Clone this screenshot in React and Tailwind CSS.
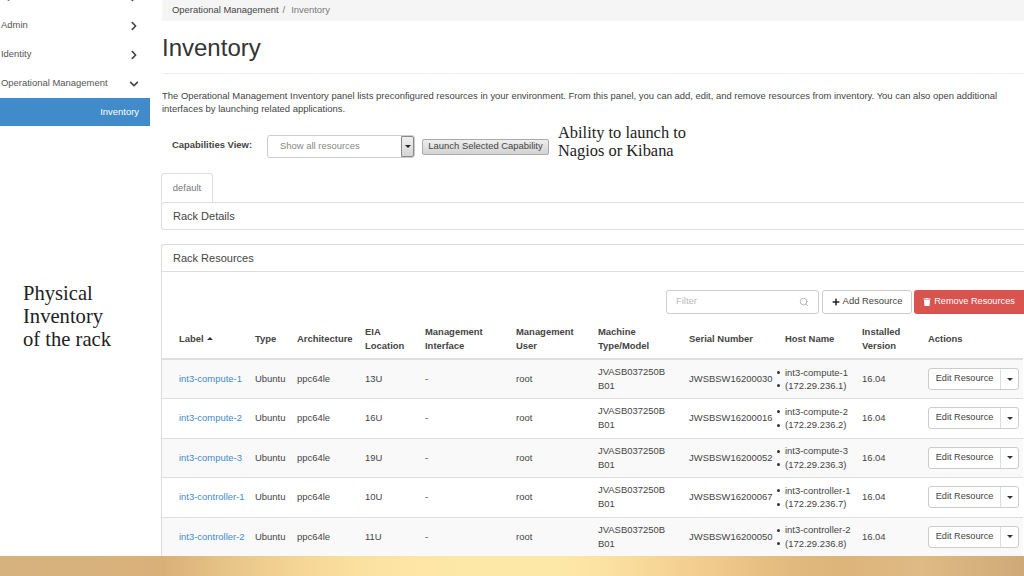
import React from 'react';
import { Search } from 'lucide-react';
import { FaChevronRight, FaChevronDown, FaPlus, FaTrash } from 'react-icons/fa';

const rows = [
    { label: 'int3-compute-1', eia: '13U', serial: 'JWSBSW16200030', host: 'int3-compute-1', ip: '(172.29.236.1)' },
    { label: 'int3-compute-2', eia: '16U', serial: 'JWSBSW16200016', host: 'int3-compute-2', ip: '(172.29.236.2)' },
    { label: 'int3-compute-3', eia: '19U', serial: 'JWSBSW16200052', host: 'int3-compute-3', ip: '(172.29.236.3)' },
    { label: 'int3-controller-1', eia: '10U', serial: 'JWSBSW16200067', host: 'int3-controller-1', ip: '(172.29.236.7)' },
    { label: 'int3-controller-2', eia: '11U', serial: 'JWSBSW16200050', host: 'int3-controller-2', ip: '(172.29.236.8)' },
];

const columns = [
    { w: 'w-[93px]', title: <>Label <span className="inline-block align-middle ml-[1px] mb-[2px] border-x-[3px] border-b-[3px] border-x-transparent border-b-[#333]" /></> },
    { w: 'w-[42px]', title: 'Type' },
    { w: 'w-[68px]', title: 'Architecture' },
    { w: 'w-[60px]', title: <>EIA<br />Location</> },
    { w: 'w-[91px]', title: <>Management<br />Interface</> },
    { w: 'w-[82px]', title: <>Management<br />User</> },
    { w: 'w-[91px]', title: <>Machine<br />Type/Model</> },
    { w: 'w-[87px]', title: 'Serial Number' },
    { w: 'w-[86px]', title: <span className="pl-[9px]">Host Name</span> },
    { w: 'w-[66px]', title: <>Installed<br />Version</> },
    { w: 'w-[95px]', title: 'Actions' },
];

function SideItem({ label, open }) {
    return (
        <div className="h-[29px] flex items-center justify-between pl-[1px] pr-[11px] text-[#555]">
            <span>{label}</span>
            {open
                ? <FaChevronDown size={10} className="text-[#444]" />
                : <FaChevronRight size={10} className="text-[#444]" />}
        </div>
    );
}

function Row({ row, striped }) {
    return (
        <tr className={`h-[39.5px] border-b border-[#ddd] whitespace-nowrap ${striped ? 'bg-[#f9f9f9]' : 'bg-white'}`}>
            <td className="pl-[17px] text-[#428bca]">{row.label}</td>
            <td>Ubuntu</td>
            <td>ppc64le</td>
            <td>{row.eia}</td>
            <td>-</td>
            <td>root</td>
            <td className="leading-[14px]">JVASB037250B<br />B01</td>
            <td>{row.serial}</td>
            <td className="leading-[13.5px] pl-[1px]">
                <div className="flex items-center gap-[5px]"><span className="w-[3px] h-[3px] rounded-full bg-[#333]" />{row.host}</div>
                <div className="flex items-center gap-[5px]"><span className="w-[3px] h-[3px] rounded-full bg-[#333]" />{row.ip}</div>
            </td>
            <td>16.04</td>
            <td>
                <div className="flex h-[22px] w-[91px] border border-[#ccc] rounded-[3px] bg-white text-[9.2px]">
                    <span className="flex-1 flex items-center justify-center border-r border-[#ddd]">Edit Resource</span>
                    <span className="w-[17px] flex items-center justify-center">
                        <span className="border-x-[3px] border-t-[3px] border-x-transparent border-t-[#333]" />
                    </span>
                </div>
            </td>
        </tr>
    );
}

export default function App() {
    return (
        <div className="relative w-[1024px] h-[576px] overflow-hidden flex flex-col bg-white text-[#444] text-[9.45px] font-['Liberation_Sans',Arial,sans-serif]">
            <div className="flex flex-1 min-h-0">
                <aside className="w-[161px] shrink-0 pr-[11px] mt-[-18px]">
                    <SideItem label="System" />
                    <SideItem label="Admin" />
                    <SideItem label="Identity" />
                    <SideItem label="Operational Management" open />
                    <div className="h-[28px] bg-[#428bca] text-white flex items-center justify-end pr-[11px]">Inventory</div>
                </aside>

                <main className="flex-1 min-w-0 overflow-hidden">
                    <div className="h-[21px] bg-[#f5f5f5] flex items-center ml-[1px] pl-[10px] gap-[4px]">
                        <span>Operational Management</span>
                        <span className="text-[#777]">/</span>
                        <span className="text-[#777] pl-[2px]">Inventory</span>
                    </div>
                    <h1 className="text-[24px] leading-[26px] mt-[14px] ml-[1px] text-[#333]">Inventory</h1>
                    <div className="border-b border-[#eee] mt-[12px] ml-[1px]" />
                    <p className="mt-[15px] ml-[1px] leading-[13px]">
                        The Operational Management Inventory panel lists preconfigured resources in your environment. From this panel, you can add, edit, and remove resources from inventory. You can also open additional<br />
                        interfaces by launching related applications.
                    </p>

                    <div className="flex items-center mt-[20px] pl-[11px]">
                        <span className="font-bold w-[95px] -mt-[2px]">Capabilities View:</span>
                        <div className="w-[148px] h-[23px] border border-[#ccc] rounded-[3px] flex items-center justify-between pl-[12px] bg-white text-[#888]">
                            <span>Show all resources</span>
                            <span className="w-[13px] h-full bg-linear-to-b from-[#f0f0f0] to-[#d4d4d4] border border-[#888] rounded-r-[2px] flex items-center justify-center">
                                <span className="border-x-[3px] border-t-[3px] border-x-transparent border-t-[#222]" />
                            </span>
                        </div>
                        <button className="ml-[7px] h-[16px] w-[127px] bg-linear-to-b from-[#eeeeee] to-[#d2d2d2] border border-[#aaa] rounded-[2px] flex items-center justify-center">Launch Selected Capability</button>
                    </div>

                    <div className="mt-[15px] h-[29px] w-[52px] border border-b-0 border-[#ddd] rounded-t-[3px] flex items-center justify-center text-[#777] bg-white">default</div>

                    <div className="h-[28px] border border-[#ddd] rounded-l-[3px] border-r-0 flex items-center pl-[11px] text-[11px]">Rack Details</div>

                    <div className="mt-[14px] border border-[#ddd] border-r-0 rounded-l-[3px]">
                        <div className="h-[27px] border-b border-[#ddd] flex items-center pl-[11px] text-[11px]">Rack Resources</div>
                        <div className="flex justify-end items-center mt-[17px] h-[25px]">
                            <div className="w-[153px] h-[24px] border border-[#ccc] rounded-[3px] flex items-center justify-between px-[9px] text-[#bbb]">
                                <span>Filter</span>
                                <Search size={10} className="text-[#aaa]" />
                            </div>
                            <div className="ml-[3px] w-[90px] h-[24px] border border-[#ccc] rounded-[3px] flex items-center justify-center gap-[3px]">
                                <FaPlus size={8} className="text-[#222]" />
                                <span>Add Resource</span>
                            </div>
                            <div className="ml-[2px] w-[110px] h-[24px] bg-[#d9534f] text-white text-[9.2px] rounded-l-[3px] flex items-center justify-center gap-[3px]">
                                <FaTrash size={8} />
                                <span>Remove Resources</span>
                            </div>
                        </div>
                        <table className="mt-[5px] w-[861px] table-fixed border-collapse">
                            <colgroup>
                                {columns.map((c, i) => <col key={i} className={c.w} />)}
                            </colgroup>
                            <thead>
                                <tr className="h-[40px] border-b-2 border-[#ddd] text-left leading-[14px]">
                                    {columns.map((c, i) => (
                                        <th key={i} className={`font-bold align-middle ${i === 0 ? 'pl-[17px]' : ''}`}>{c.title}</th>
                                    ))}
                                </tr>
                            </thead>
                            <tbody>
                                {rows.map((r, i) => <Row key={r.label} row={r} striped={i % 2 === 0} />)}
                            </tbody>
                        </table>
                    </div>
                </main>
            </div>

            <div className="h-[20px] shrink-0 bg-[linear-gradient(90deg,#d6b27e_0%,#d8b27c_10%,#dab078_16%,#e6c488_22%,#f5d596_29%,#fce2a2_36%,#fde8a8_45%,#fde8a8_55%,#fbdfa0_60%,#f0c98c_70%,#e2b97e_77%,#dcb47a_82%,#dfba84_90%,#cfaa78_100%)]" />

            <div className="absolute left-[558px] top-[124px] font-['Liberation_Serif',serif] text-[16.4px] leading-[18px] text-[#222]">
                Ability to launch to<br />Nagios or Kibana
            </div>
            <div className="absolute left-[23px] top-[282px] font-['Liberation_Serif',serif] text-[20.6px] leading-[23px] text-[#222]">
                Physical<br />Inventory<br />of the rack
            </div>
        </div>
    );
}
